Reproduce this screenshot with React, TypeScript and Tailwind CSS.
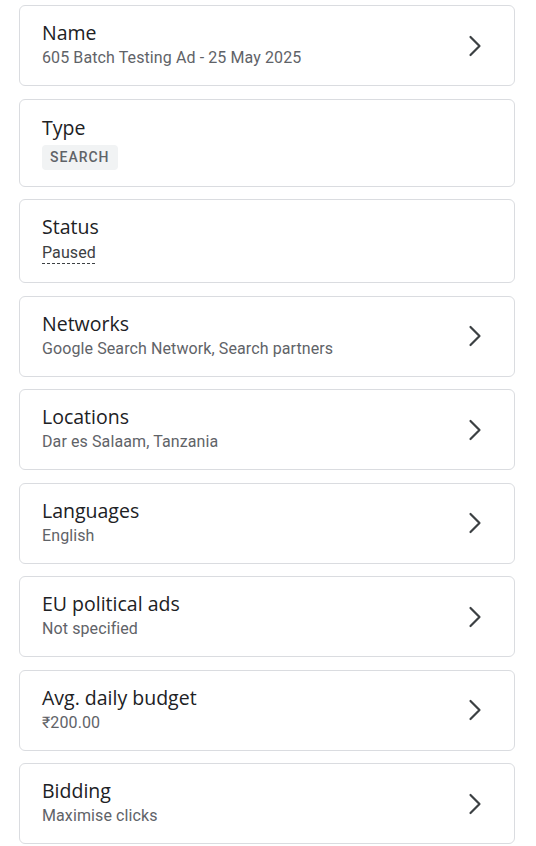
const items = [
  { title: "Networks", value: "Google Search Network, Search partners" },
  { title: "Locations", value: "Dar es Salaam, Tanzania" },
  { title: "Languages", value: "English" },
  { title: "EU political ads", value: "Not specified" },
  { title: "Avg. daily budget", value: "₹200.00" },
  { title: "Bidding", value: "Maximise clicks" },
];

const Chevron = () => (
  <svg width="14" height="22" viewBox="0 0 14 22" fill="none" className="shrink-0">
    <path d="M2.5 2 L11.5 11 L2.5 20" stroke="#3c4043" strokeWidth="2.2" strokeLinecap="round" strokeLinejoin="round" />
  </svg>
);

const Title = ({ children }: { children: React.ReactNode }) => (
  <div className="text-[19.5px] leading-6 font-medium text-[#202124] font-['Open_Sans',sans-serif]">
    {children}
  </div>
);

const Card = ({ children, arrow }: { children: React.ReactNode; arrow?: boolean }) => (
  <div className="flex items-center border border-[#dadce0] rounded-md bg-white pl-[22px] pr-[32px]">
    <div className="flex-1 min-w-0">{children}</div>
    {arrow && <Chevron />}
  </div>
);

export default function App() {
  return (
    <div className="min-h-screen bg-white pl-[19px] pr-[21px] pt-[5px] flex flex-col font-['Roboto',sans-serif]">
      <div className="flex flex-col gap-[12.5px]">
        <Card arrow>
          <div className="py-[15px]">
            <Title>Name</Title>
            <div className="mt-px text-[16px] tracking-[0.1px] leading-6 text-[#5f6368]">
              605 Batch Testing Ad - 25 May 2025
            </div>
          </div>
        </Card>

        <Card>
          <div className="pt-4 pb-4">
            <Title>Type</Title>
            <span className="mt-[5px] inline-flex h-[25px] items-center rounded bg-[#f1f3f4] px-2 text-[14px] font-medium tracking-[1px] text-[#5f6368]">
              SEARCH
            </span>
          </div>
        </Card>

        <Card>
          <div className="pt-[15px] pb-[17px]">
            <Title>Status</Title>
            <div className="mt-[2px] text-[16px] tracking-[0.1px] leading-6 text-[#3c4043]">
              <span className="underline decoration-dashed decoration-[#3c4043] underline-offset-[5px] decoration-1">
                Paused
              </span>
            </div>
          </div>
        </Card>

        {items.map((item) => (
          <Card arrow key={item.title}>
            <div className="py-[15px]">
              <Title>{item.title}</Title>
              <div className="mt-px text-[16px] tracking-[0.1px] leading-6 text-[#5f6368]">{item.value}</div>
            </div>
          </Card>
        ))}
      </div>
    </div>
  );
}
